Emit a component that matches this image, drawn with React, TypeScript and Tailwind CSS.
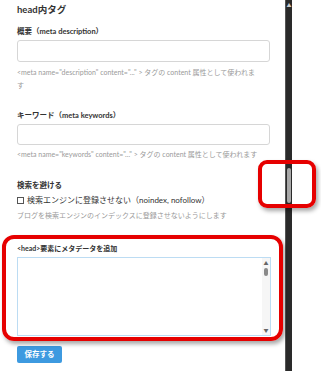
import React from "react";

const font = { fontFamily: '"Lato", "Noto Sans CJK JP", sans-serif' };

const Hint = ({ className = "", children }: { className?: string; children: React.ReactNode }) => (
  <p className={`text-[7px] leading-[13px] text-[#9a9a9a] ${className}`}>{children}</p>
);

const App = () => {
  return (
    <div className="relative flex h-[371px] w-[321px] overflow-hidden bg-white" style={font}>
      {/* 設定フォーム */}
      <div className="w-[285px] shrink-0 pl-[17px] pr-[15px] pt-[3px] text-[#333]">
        <h2 className="text-[9.5px] font-bold leading-[14px]">head内タグ</h2>

        <label className="mt-[10px] block text-[7.5px] font-bold leading-[10px]">
          概要（meta description）
        </label>
        <div className="mt-[3px] h-[22px] w-[253px] rounded-[3px] border border-[#d6d6d6]" />
        <Hint className="mt-[4px]">
          &lt;meta name="description" content="..." &gt; タグの content 属性として使われま
          <br />す
        </Hint>

        <label className="mt-[19px] block text-[7.5px] font-bold leading-[10px]">
          キーワード（meta keywords）
        </label>
        <div className="mt-[3px] h-[21px] w-[253px] rounded-[3px] border border-[#d6d6d6]" />
        <Hint className="mt-[3px]">
          &lt;meta name="keywords" content="..." &gt; タグの content 属性として使われます
        </Hint>

        <h3 className="mt-[20px] text-[7.5px] font-bold leading-[10px]">検索を避ける</h3>
        <div className="mt-[2px] flex items-center gap-[3px] text-[8px] leading-[14px] text-[#333]">
          <span className="inline-block h-[7px] w-[7px] border border-[#555]" />
          <span>検索エンジンに登録させない（noindex, nofollow）</span>
        </div>
        <Hint className="mt-[2px]">
          ブログを検索エンジンのインデックスに登録させないようにします
        </Hint>

        <label className="mt-[21px] block text-[7px] font-bold leading-[10px]">
          &lt;head&gt;要素にメタデータを追加
        </label>
        <div className="mt-[4px] flex h-[79px] w-[254px] border border-[#bcdcf3]">
          <div className="flex-1" />
          <div className="flex w-[8px] flex-col items-center bg-[#f6f6f6] py-[2px]">
            <span className="text-[5px] leading-[6px] text-[#666]">▲</span>
            <span className="mt-[2px] h-[8px] w-[4px] rounded-full bg-[#8a8a8a]" />
            <span className="mt-auto text-[5px] leading-[6px] text-[#666]">▼</span>
          </div>
        </div>

        <button className="mt-[10px] h-[17px] w-[45px] rounded-[2px] bg-[#3d9ae0] text-[7.5px] font-bold text-white">
          保存する
        </button>
      </div>

      {/* ブラウザのスクロールバー */}
      <div className="flex w-[7px] shrink-0 flex-col items-center border-l border-[#555] bg-[#2a2a2a]">
        <span className="mt-[3px] text-[5px] leading-[5px] text-[#ccc]">▲</span>
        <span className="mt-[160px] h-[35px] w-[4px] rounded-full bg-[#a8a8a8]" />
      </div>
      <div className="flex-1 bg-white" />

      {/* 注釈の赤枠 */}
      <div className="absolute left-[2px] top-[235px] h-[106px] w-[281px] rounded-[12px] border-[4px] border-[#e60000] shadow-[2px_3px_4px_rgba(0,0,0,0.35)]" />
      <div className="absolute left-[258px] top-[160px] h-[48px] w-[58px] rounded-[9px] border-[4px] border-[#e60000] shadow-[2px_3px_4px_rgba(0,0,0,0.35)]" />
    </div>
  );
};

export default App;
